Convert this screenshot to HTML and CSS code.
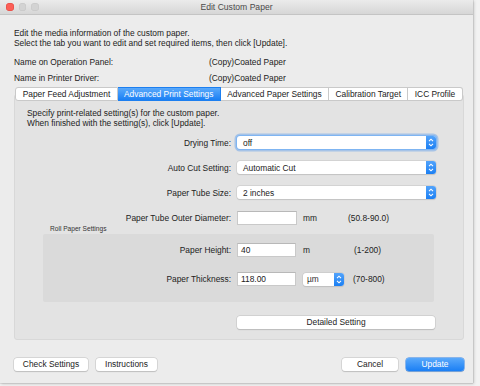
FILE: index.html
```html
<!DOCTYPE html>
<html>
<head>
<meta charset="utf-8">
<link rel="stylesheet" href="styles.css">
</head>
<body>
<div class="window">
  <div class="titlebar">
    <div class="lights"><span class="light red"></span><span class="light"></span><span class="light"></span></div>
    <div class="title">Edit Custom Paper</div>
  </div>
  <div class="content">
    <p class="intro">Edit the media information of the custom paper.<br>Select the tab you want to edit and set required items, then click [Update].</p>
    <div class="names">
      <div class="name-row"><span class="name-key">Name on Operation Panel:</span><span>(Copy)Coated Paper</span></div>
      <div class="name-row"><span class="name-key">Name in Printer Driver:</span><span>(Copy)Coated Paper</span></div>
    </div>
    <div class="tabs">
      <span class="tab">Paper Feed Adjustment</span>
      <span class="tab active">Advanced Print Settings</span>
      <span class="tab">Advanced Paper Settings</span>
      <span class="tab">Calibration Target</span>
      <span class="tab">ICC Profile</span>
    </div>
    <div class="panel">
      <p class="panel-intro">Specify print-related setting(s) for the custom paper.<br>When finished with the setting(s), click [Update].</p>
      <div class="rows">
        <div class="row">
          <span class="label">Drying Time:</span>
          <div class="select wide focus"><span class="sel-text">off</span><span class="stepper"><svg viewBox="0 0 10 13" width="10" height="13"><path d="M3 5.2 L5 3.2 L7 5.2 M3 7.8 L5 9.8 L7 7.8" fill="none" stroke="#fff" stroke-width="1.1"/></svg></span></div>
        </div>
        <div class="row">
          <span class="label">Auto Cut Setting:</span>
          <div class="select wide"><span class="sel-text">Automatic Cut</span><span class="stepper"><svg viewBox="0 0 10 13" width="10" height="13"><path d="M3 5.2 L5 3.2 L7 5.2 M3 7.8 L5 9.8 L7 7.8" fill="none" stroke="#fff" stroke-width="1.1"/></svg></span></div>
        </div>
        <div class="row">
          <span class="label">Paper Tube Size:</span>
          <div class="select wide"><span class="sel-text">2 inches</span><span class="stepper"><svg viewBox="0 0 10 13" width="10" height="13"><path d="M3 5.2 L5 3.2 L7 5.2 M3 7.8 L5 9.8 L7 7.8" fill="none" stroke="#fff" stroke-width="1.1"/></svg></span></div>
        </div>
        <div class="row">
          <span class="label">Paper Tube Outer Diameter:</span>
          <div class="input"></div>
          <span class="unit">mm</span>
          <span class="range">(50.8-90.0)</span>
        </div>
      </div>
      <div class="roll-label">Roll Paper Settings</div>
      <div class="roll">
        <div class="row">
          <span class="label roll-lbl">Paper Height:</span>
          <div class="input roll-in">40</div>
          <span class="unit roll-unit">m</span>
          <span class="range">(1-200)</span>
        </div>
        <div class="row">
          <span class="label roll-lbl">Paper Thickness:</span>
          <div class="input roll-in">118.00</div>
          <div class="select small"><span class="sel-text">µm</span><span class="stepper"><svg viewBox="0 0 10 13" width="10" height="13"><path d="M3 5.2 L5 3.2 L7 5.2 M3 7.8 L5 9.8 L7 7.8" fill="none" stroke="#fff" stroke-width="1.1"/></svg></span></div>
          <span class="range thick-range">(70-800)</span>
        </div>
      </div>
      <div class="detail-row"><button class="btn detail">Detailed Setting</button></div>
    </div>
    <div class="footer">
      <button class="btn">Check Settings</button>
      <button class="btn">Instructions</button>
      <span class="spacer"></span>
      <button class="btn cancel">Cancel</button>
      <button class="btn primary">Update</button>
    </div>
  </div>
</div>
</body>
</html>
```
FILE: styles.css
```css
html, body {
  margin: 0;
  padding: 0;
}
body {
  background: #f2f2f2;
  font-family: "Liberation Sans", Arial, sans-serif;
  font-size: 8.4px;
  line-height: 10px;
  color: #222;
  width: 480px;
  height: 386px;
  overflow: hidden;
}
.window {
  width: 473px;
  height: 383px;
  background: #ececec;
  box-shadow: 0 0 1px rgba(0,0,0,0.45), 1px 1px 3px rgba(0,0,0,0.18);
  display: flex;
  flex-direction: column;
}
.titlebar {
  height: 14px;
  border-bottom: 1px solid #c4c4c4;
  background: linear-gradient(#ebebeb, #d6d6d6);
  display: flex;
  align-items: center;
  position: relative;
}
.lights {
  display: flex;
  gap: 5px;
  padding-left: 6px;
}
.light {
  width: 7.5px;
  height: 7.5px;
  border-radius: 50%;
  background: #d3d3d3;
  box-shadow: inset 0 0 0 0.5px #c5c5c5;
}
.light.red {
  background: #fc5f57;
  box-shadow: inset 0 0 0 0.5px #e0443e;
}
.title {
  position: absolute;
  left: 0;
  right: 0;
  text-align: center;
  color: #4a4a4a;
  font-size: 8.6px;
}
.content {
  padding: 13px 9px 0 14px;
  display: flex;
  flex-direction: column;
}
p {
  margin: 0;
}
.names {
  margin-top: 9px;
  display: flex;
  flex-direction: column;
  gap: 6px;
}
.name-row {
  display: flex;
}
.name-key {
  width: 195px;
}
.tabs {
  display: flex;
  justify-content: center;
  margin-top: 4px;
  margin-bottom: -7px;
  position: relative;
  z-index: 1;
}
.tab {
  height: 12px;
  line-height: 12px;
  background: #fff;
  border: 1px solid #c9c9c9;
  border-left: none;
  padding: 0 6.4px;
  color: #222;
  white-space: nowrap;
}
.tab:first-child {
  border-left: 1px solid #c9c9c9;
  border-radius: 3px 0 0 3px;
}
.tab:last-child {
  border-radius: 0 3px 3px 0;
}
.tab.active {
  background: linear-gradient(#5aa9fb, #1a7ff4);
  border-color: #1c7ff0;
  color: #fff;
}
.panel {
  background: #e3e3e3;
  border: 1px solid #d8d8d8;
  border-radius: 3px;
  padding: 13px 0 10px 0;
  display: flex;
  flex-direction: column;
}
.panel-intro {
  padding-left: 12px;
}
.rows {
  margin-top: 8px;
  display: flex;
  flex-direction: column;
  gap: 12px;
}
.row {
  display: flex;
  align-items: center;
}
.label {
  width: 216px;
  text-align: right;
  padding-right: 5px;
  flex: none;
}
.select {
  height: 13px;
  background: #fff;
  border-radius: 3px;
  box-shadow: 0 0 0 0.5px #c6c6c6, 0 0.5px 1px rgba(0,0,0,0.15);
  display: flex;
  align-items: center;
  justify-content: space-between;
}
.select.wide {
  width: 199px;
  margin-left: 1px;
}
.select.focus {
  box-shadow: 0 0 0 1px #7fb5f2, 0 0 0 2.5px rgba(92,156,236,0.45);
}
.sel-text {
  padding-left: 6px;
}
.stepper {
  width: 10px;
  height: 13px;
  background: linear-gradient(#52a3fb, #1b7ff3);
  border-radius: 0 3px 3px 0;
  display: flex;
}
.input {
  width: 58px;
  height: 12px;
  line-height: 12px;
  background: #fff;
  border: 1px solid #c9c9c9;
  border-top-color: #b8b8b8;
  box-sizing: content-box;
  margin-left: 1px;
}
.unit {
  width: 45px;
  padding-left: 6px;
  flex: none;
}
.range {
  flex: none;
}
.roll-label {
  margin-top: 0;
  padding-left: 35px;
  font-size: 6.6px;
  line-height: 8px;
  color: #333;
}
.roll {
  margin: 1px 29px 0 28px;
  background: #dadada;
  border-radius: 2px;
  padding: 9px 0 16px 0;
  display: flex;
  flex-direction: column;
  gap: 15px;
}
.roll-lbl {
  width: 188px;
  padding-right: 6px;
}
.roll-in {
  width: 54px;
  padding-left: 3px;
  margin-left: 0;
}
.roll-unit {
  width: 51px;
  padding-left: 7px;
}
.select.small {
  width: 41px;
  margin-left: 7px;
}
.select.small .sel-text {
  padding-left: 4px;
  color: #333;
}
.thick-range {
  margin-left: 9px;
}
.detail-row {
  margin-top: 14px;
  padding-left: 222px;
}
.btn {
  font-family: "Liberation Sans", Arial, sans-serif;
  font-size: 8.4px;
  line-height: 11px;
  height: 13px;
  padding: 0;
  margin: 0;
  background: #fff;
  border: none;
  border-radius: 3px;
  box-shadow: 0 0 0 0.5px #c4c4c4, 0 0.5px 1px rgba(0,0,0,0.2);
  color: #222;
  text-align: center;
}
.detail {
  width: 198px;
}
.footer {
  margin-top: 18px;
  display: flex;
  gap: 8px;
}
.footer .btn:first-child {
  width: 74px;
}
.footer .btn:nth-child(2) {
  width: 61px;
}
.spacer {
  flex: 1;
}
.footer .cancel {
  width: 56px;
}
.footer .primary {
  width: 58px;
  background: linear-gradient(#5aa9fb, #1b7ff4);
  color: #fff;
  box-shadow: 0 0 0 0.5px #2a82ee, 0 0.5px 1px rgba(0,0,0,0.2);
}
```
